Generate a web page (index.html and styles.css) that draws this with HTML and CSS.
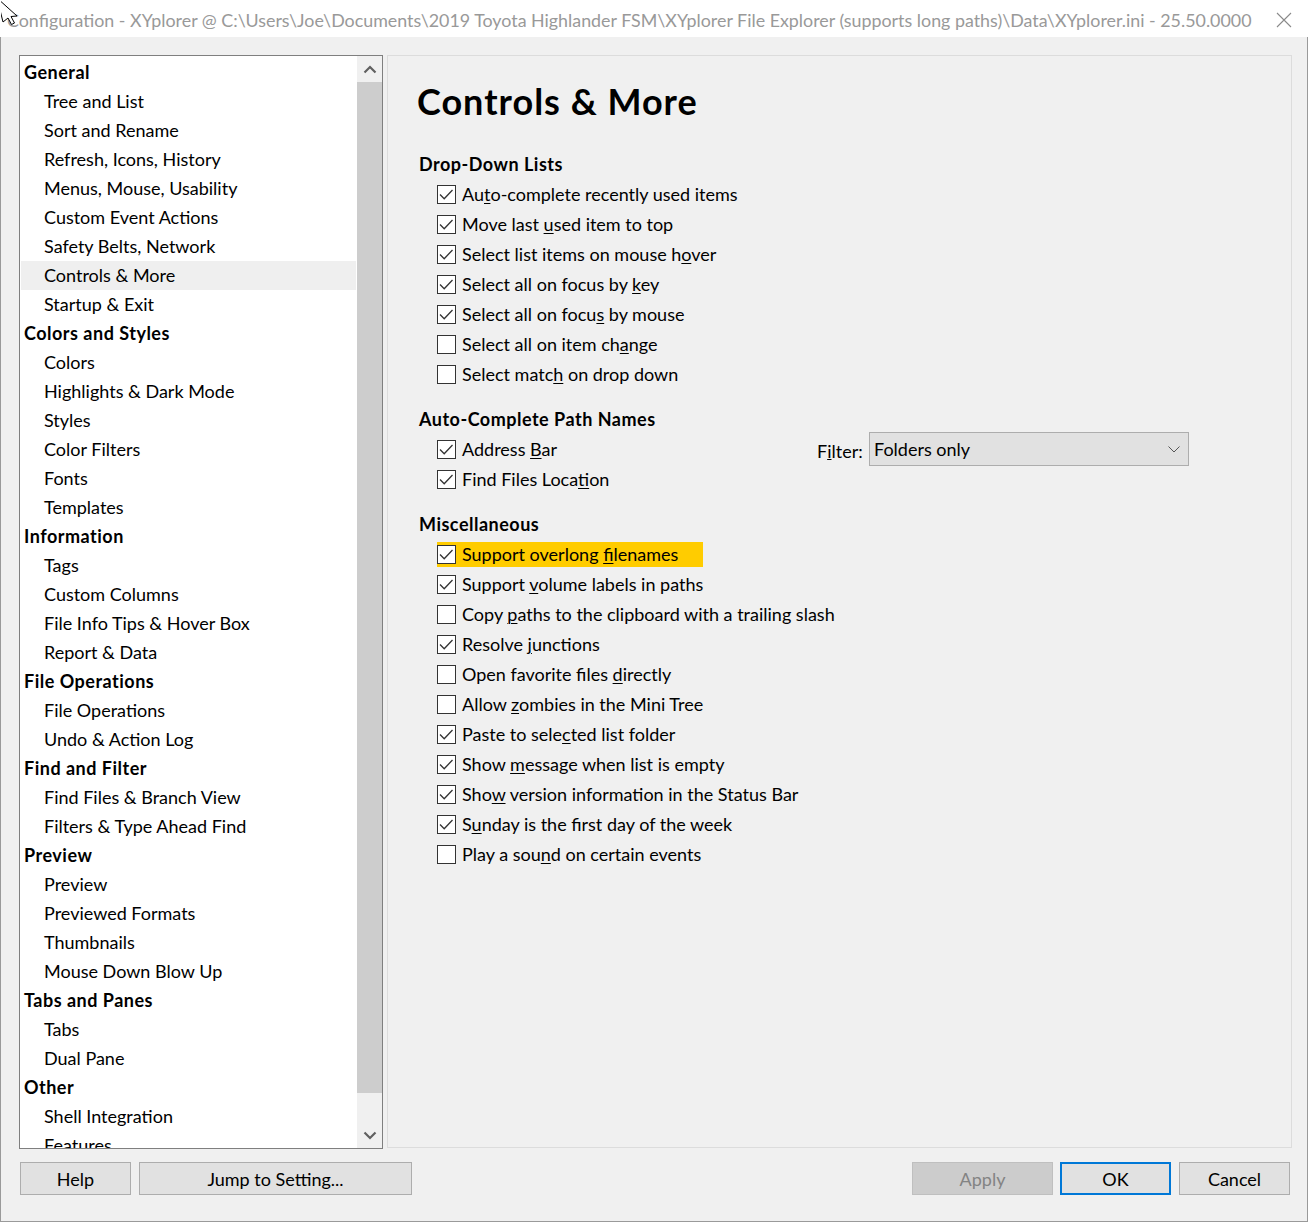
FILE: index.html
```html
<!DOCTYPE html>
<html lang="en">
<head>
<meta charset="utf-8">
<title>Configuration - XYplorer</title>
<link rel="stylesheet" href="styles.css">
</head>
<body>
<div class="window">
  <div class="titlebar">
    <span class="title">Configuration - XYplorer @ C:\Users\Joe\Documents\2019 Toyota Highlander FSM\XYplorer File Explorer (supports long paths)\Data\XYplorer.ini - 25.50.0000</span>
    <svg class="close" width="16" height="16" viewBox="0 0 16 16"><path d="M1 1 L15 15 M15 1 L1 15" stroke="#8a8a8a" stroke-width="1.1" fill="none"/></svg>
    <svg class="cursor" width="22" height="26" viewBox="0 0 22 26"><path d="M-4 -2 L16 16 L10 16.5 L13.5 23 L10.5 24.5 L7 18 L2 22 Z" fill="#fff" stroke="#000" stroke-width="1"/></svg>
  </div>
  <div class="content">
    <div class="panes">
      <div class="tree">
        <ul class="tree-list">
          <li class="cat">General</li>
          <li>Tree and List</li>
          <li>Sort and Rename</li>
          <li>Refresh, Icons, History</li>
          <li>Menus, Mouse, Usability</li>
          <li>Custom Event Actions</li>
          <li>Safety Belts, Network</li>
          <li class="sel">Controls &amp; More</li>
          <li>Startup &amp; Exit</li>
          <li class="cat">Colors and Styles</li>
          <li>Colors</li>
          <li>Highlights &amp; Dark Mode</li>
          <li>Styles</li>
          <li>Color Filters</li>
          <li>Fonts</li>
          <li>Templates</li>
          <li class="cat">Information</li>
          <li>Tags</li>
          <li>Custom Columns</li>
          <li>File Info Tips &amp; Hover Box</li>
          <li>Report &amp; Data</li>
          <li class="cat">File Operations</li>
          <li>File Operations</li>
          <li>Undo &amp; Action Log</li>
          <li class="cat">Find and Filter</li>
          <li>Find Files &amp; Branch View</li>
          <li>Filters &amp; Type Ahead Find</li>
          <li class="cat">Preview</li>
          <li>Preview</li>
          <li>Previewed Formats</li>
          <li>Thumbnails</li>
          <li>Mouse Down Blow Up</li>
          <li class="cat">Tabs and Panes</li>
          <li>Tabs</li>
          <li>Dual Pane</li>
          <li class="cat">Other</li>
          <li>Shell Integration</li>
          <li>Features</li>
        </ul>
        <div class="scrollbar">
          <div class="sb-btn"><svg width="14" height="9" viewBox="0 0 14 9"><path d="M1.5 7.5 L7 2 L12.5 7.5" stroke="#606060" stroke-width="2.2" fill="none"/></svg></div>
          <div class="sb-track"><div class="sb-thumb"></div></div>
          <div class="sb-btn"><svg width="14" height="9" viewBox="0 0 14 9"><path d="M1.5 1.5 L7 7 L12.5 1.5" stroke="#606060" stroke-width="2.2" fill="none"/></svg></div>
        </div>
      </div>
      <div class="page">
        <h1 class="page-title">Controls &amp; More</h1>

        <section class="group">
          <h2 class="group-title">Drop-Down Lists</h2>
          <div class="opt"><span class="cb on"><svg viewBox="0 0 19 19"><polyline points="3,9.5 7.2,13.7 15.5,5"/></svg></span><span>Au<u>t</u>o-complete recently used items</span></div>
          <div class="opt"><span class="cb on"><svg viewBox="0 0 19 19"><polyline points="3,9.5 7.2,13.7 15.5,5"/></svg></span><span>Move last <u>u</u>sed item to top</span></div>
          <div class="opt"><span class="cb on"><svg viewBox="0 0 19 19"><polyline points="3,9.5 7.2,13.7 15.5,5"/></svg></span><span>Select list items on mouse h<u>o</u>ver</span></div>
          <div class="opt"><span class="cb on"><svg viewBox="0 0 19 19"><polyline points="3,9.5 7.2,13.7 15.5,5"/></svg></span><span>Select all on focus by <u>k</u>ey</span></div>
          <div class="opt"><span class="cb on"><svg viewBox="0 0 19 19"><polyline points="3,9.5 7.2,13.7 15.5,5"/></svg></span><span>Select all on focu<u>s</u> by mouse</span></div>
          <div class="opt"><span class="cb"></span><span>Select all on item ch<u>a</u>nge</span></div>
          <div class="opt"><span class="cb"></span><span>Select matc<u>h</u> on drop down</span></div>
        </section>

        <section class="group">
          <h2 class="group-title">Auto-Complete Path Names</h2>
          <div class="ac-row">
            <div class="opt"><span class="cb on"><svg viewBox="0 0 19 19"><polyline points="3,9.5 7.2,13.7 15.5,5"/></svg></span><span>Address <u>B</u>ar</span></div>
            <div class="filter">
              <span class="filter-label">F<u>i</u>lter:</span>
              <div class="combo"><span>Folders only</span><svg width="12" height="7" viewBox="0 0 12 7"><path d="M0.5 0.5 L6 6 L11.5 0.5" stroke="#555" stroke-width="1" fill="none"/></svg></div>
            </div>
          </div>
          <div class="opt"><span class="cb on"><svg viewBox="0 0 19 19"><polyline points="3,9.5 7.2,13.7 15.5,5"/></svg></span><span>Find Files Loca<u>t</u>ion</span></div>
        </section>

        <section class="group">
          <h2 class="group-title">Miscellaneous</h2>
          <div class="opt"><span class="hl"><span class="cb on"><svg viewBox="0 0 19 19"><polyline points="3,9.5 7.2,13.7 15.5,5"/></svg></span><span>Support overlong <u>f</u>ilenames</span></span></div>
          <div class="opt"><span class="cb on"><svg viewBox="0 0 19 19"><polyline points="3,9.5 7.2,13.7 15.5,5"/></svg></span><span>Support <u>v</u>olume labels in paths</span></div>
          <div class="opt"><span class="cb"></span><span>Copy <u>p</u>aths to the clipboard with a trailing slash</span></div>
          <div class="opt"><span class="cb on"><svg viewBox="0 0 19 19"><polyline points="3,9.5 7.2,13.7 15.5,5"/></svg></span><span>Resolve <u>j</u>unctions</span></div>
          <div class="opt"><span class="cb"></span><span>Open favorite files <u>d</u>irectly</span></div>
          <div class="opt"><span class="cb"></span><span>Allow <u>z</u>ombies in the Mini Tree</span></div>
          <div class="opt"><span class="cb on"><svg viewBox="0 0 19 19"><polyline points="3,9.5 7.2,13.7 15.5,5"/></svg></span><span>Paste to sele<u>c</u>ted list folder</span></div>
          <div class="opt"><span class="cb on"><svg viewBox="0 0 19 19"><polyline points="3,9.5 7.2,13.7 15.5,5"/></svg></span><span>Show <u>m</u>essage when list is empty</span></div>
          <div class="opt"><span class="cb on"><svg viewBox="0 0 19 19"><polyline points="3,9.5 7.2,13.7 15.5,5"/></svg></span><span>Sho<u>w</u> version information in the Status Bar</span></div>
          <div class="opt"><span class="cb on"><svg viewBox="0 0 19 19"><polyline points="3,9.5 7.2,13.7 15.5,5"/></svg></span><span>S<u>u</u>nday is the first day of the week</span></div>
          <div class="opt"><span class="cb"></span><span>Play a sou<u>n</u>d on certain events</span></div>
        </section>
      </div>
    </div>
    <div class="buttons">
      <div class="btn-group">
        <button class="btn btn-help">Help</button>
        <button class="btn btn-jump">Jump to Setting...</button>
      </div>
      <div class="btn-group">
        <button class="btn btn-apply">Apply</button>
        <button class="btn btn-ok">OK</button>
        <button class="btn btn-cancel">Cancel</button>
      </div>
    </div>
  </div>
</div>
</body>
</html>
```

FILE: styles.css
```css
* { box-sizing: border-box; }

html, body {
  margin: 0;
  padding: 0;
  background: #ffffff;
}

body {
  font-family: Lato, "Noto Sans", sans-serif;
  font-size: 18px;
  color: #000;
  width: 1309px;
  height: 1222px;
  overflow: hidden;
}

.window {
  width: 1308px;
  height: 1222px;
  display: flex;
  flex-direction: column;
}

.titlebar {
  position: relative;
  height: 37px;
  background: #ffffff;
  display: flex;
  align-items: center;
  padding-left: 6px;
  border-left: 1px solid #ffffff;
}

.title {
  color: #999999;
  font-size: 17.85px;
  white-space: nowrap;
  padding-top: 2px;
}

.close {
  position: absolute;
  left: 1275px;
  top: 12px;
}

.cursor {
  position: absolute;
  left: 0;
  top: 0;
}

.content {
  flex: 1;
  background: #f0f0f0;
  border-left: 1px solid #9a9a9a;
  border-right: 1px solid #9a9a9a;
  border-bottom: 1px solid #9a9a9a;
  padding: 18px 15px 0 18px;
  display: flex;
  flex-direction: column;
}

.panes {
  display: flex;
  gap: 4px;
  height: 1094px;
}

/* ---------- Tree ---------- */
.tree {
  width: 364px;
  height: 1094px;
  border: 1px solid #7f7f7f;
  background: #ffffff;
  display: flex;
  overflow: hidden;
}

.tree-list {
  list-style: none;
  margin: 0;
  padding: 2px 1px 0 1px;
  flex: 1;
  overflow: hidden;
}

.tree-list li {
  height: 29px;
  line-height: 29px;
  padding-left: 23px;
  white-space: nowrap;
}

.tree-list li.cat {
  padding-left: 3px;
  font-weight: 700;
  letter-spacing: 0.5px;
}

.tree-list li.sel {
  background: #efefef;
}

.scrollbar {
  width: 25px;
  background: #f0f0f0;
  display: flex;
  flex-direction: column;
}

.sb-btn {
  height: 26px;
  display: flex;
  align-items: center;
  justify-content: center;
}

.sb-track {
  flex: 1;
  position: relative;
}

.sb-thumb {
  height: 1011px;
  background: #cdcdcd;
}

/* ---------- Page ---------- */
.page {
  width: 905px;
  height: 1093px;
  border: 1px solid #dcdcdc;
  background: #f0f0f0;
  padding: 21px 0 0 29px;
}

.page-title {
  margin: 0 0 24px 0;
  font-size: 36px;
  font-weight: 700;
  letter-spacing: 1px;
  line-height: 48px;
}

.group {
  padding-left: 2px;
  margin-bottom: 15px;
}

.group-title {
  margin: 0;
  font-size: 18px;
  font-weight: 700;
  letter-spacing: 0.5px;
  line-height: 30px;
  height: 30px;
}

.opt {
  height: 30px;
  display: flex;
  align-items: center;
  padding-left: 18px;
  white-space: nowrap;
}

.opt u {
  text-decoration-thickness: 1px;
  text-underline-offset: 2px;
}

.cb {
  width: 19px;
  height: 19px;
  border: 1px solid #333333;
  background: #ffffff;
  margin-right: 6px;
  flex: none;
  position: relative;
}

.cb svg {
  position: absolute;
  left: -1px;
  top: -1px;
  width: 19px;
  height: 19px;
}

.cb polyline {
  fill: none;
  stroke: #333333;
  stroke-width: 1.3;
}

.hl {
  display: inline-flex;
  align-items: center;
  height: 25px;
  background: #ffcc00;
  padding-right: 25px;
}

.ac-row {
  display: grid;
  grid-template-columns: 380px auto;
  height: 30px;
}

.ac-row .opt {
  padding-left: 18px;
}

.filter {
  display: flex;
  align-items: center;
  height: 30px;
  margin-left: 18px;
}

.filter-label {
  width: 52px;
  padding-top: 4px;
}

.combo {
  width: 320px;
  height: 34px;
  margin-top: -2px;
  margin-bottom: -2px;
  background: #e1e1e1;
  border: 1px solid #adadad;
  display: flex;
  align-items: center;
  justify-content: space-between;
  padding: 0 8px 0 4px;
}

/* ---------- Buttons ---------- */
.buttons {
  margin-top: 13px;
  display: flex;
  justify-content: space-between;
  padding-left: 1px;
  padding-right: 2px;
}

.btn-group {
  display: flex;
  gap: 8px;
}

.btn {
  font-family: inherit;
  font-size: 18px;
  height: 33px;
  background: #e1e1e1;
  border: 1px solid #adadad;
  color: #000;
  padding: 0;
  margin: 0;
}

.btn-help { width: 111px; }
.btn-jump { width: 273px; }
.btn-apply {
  width: 141px;
  background: #cccccc;
  border-color: #bfbfbf;
  color: #838383;
  margin-right: -1px;
}
.btn-ok {
  width: 111px;
  border: 2px solid #0078d7;
}
.btn-cancel { width: 111px; }
```
